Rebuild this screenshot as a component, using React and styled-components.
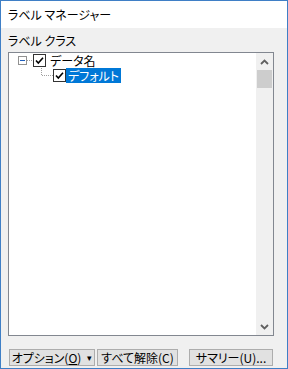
import React, { useState } from 'react'
import styled, { createGlobalStyle } from 'styled-components'

const GlobalStyle = createGlobalStyle`
  html, body {
    margin: 0;
    padding: 0;
    background: #ffffff;
  }
  body {
    font-family: 'Noto Sans CJK JP', 'Noto Sans', sans-serif;
    font-size: 12px;
    color: #000;
    font-feature-settings: 'palt';
  }
`

const Checkbox = () => (
  <CheckBoxBox>
    <svg width="13" height="13" viewBox="0 0 13 13">
      <rect x="0.5" y="0.5" width="12" height="12" fill="#fff" stroke="#333" />
      <path d="M3 6.5 L5.3 9 L10 3.8" fill="none" stroke="#000" strokeWidth="1.6" />
    </svg>
  </CheckBoxBox>
)

const Expander = () => (
  <svg width="15" height="9" viewBox="0 0 15 9">
    <rect x="0.5" y="0.5" width="8" height="8" fill="#fff" stroke="#919191" />
    <line x1="2" y1="4.5" x2="7" y2="4.5" stroke="#1e5ebc" />
    <line x1="9" y1="4.5" x2="15" y2="4.5" stroke="#a0a0a0" strokeDasharray="1 1" />
  </svg>
)

const ChildConnector = () => (
  <svg width="17" height="15" viewBox="0 0 17 15">
    <line x1="5.5" y1="0" x2="5.5" y2="7" stroke="#a0a0a0" strokeDasharray="1 1" />
    <line x1="6" y1="7.5" x2="17" y2="7.5" stroke="#a0a0a0" strokeDasharray="1 1" />
  </svg>
)

const Chevron = ({ down }) => (
  <svg width="9" height="6" viewBox="0 0 9 6">
    <path
      d={down ? 'M1 1 L4.5 4.5 L8 1' : 'M1 5 L4.5 1.5 L8 5'}
      fill="none"
      stroke="#606060"
      strokeWidth="1.8"
    />
  </svg>
)

const App = () => {
  const [selected] = useState('default')

  return (
    <Window>
      <GlobalStyle />
      <TitleBar>ラベル マネージャー</TitleBar>
      <Body>
        <GroupLabel>ラベル クラス</GroupLabel>
        <ListBox>
          <Tree>
            <Row indent={9}>
              <Expander />
              <Checkbox />
              <Label>データ名</Label>
            </Row>
            <Row indent={27}>
              <ChildConnector />
              <Checkbox />
              <Label selected={selected === 'default'}>デフォルト</Label>
            </Row>
          </Tree>
          <ScrollBar>
            <ArrowButton>
              <Chevron />
            </ArrowButton>
            <Thumb />
            <Track />
            <ArrowButton>
              <Chevron down />
            </ArrowButton>
          </ScrollBar>
        </ListBox>
        <ButtonRow>
          <Button width={86}>
            オプション(<u>O</u>)<Caret>▾</Caret>
          </Button>
          <Button width={81}>すべて解除(C)</Button>
          <Button width={84} spaced>サマリー(U)...</Button>
        </ButtonRow>
      </Body>
    </Window>
  )
}

export default App

const Window = styled.div`
  width: 288px;
  height: 369px;
  box-sizing: border-box;
  border: 1px solid #3f7fc6;
  display: flex;
  flex-direction: column;
  background: #fff;
`

const TitleBar = styled.div`
  height: 27px;
  padding-left: 7px;
  display: flex;
  align-items: center;
  background: #fff;
  font-size: 12px;
  line-height: 16px;
`

const Body = styled.div`
  flex: 1;
  background: #f0f0f0;
  padding: 5px 13px 2px 7px;
  display: flex;
  flex-direction: column;
`

const GroupLabel = styled.div`
  height: 16px;
  line-height: 16px;
  margin-bottom: 3px;
`

const ListBox = styled.div`
  height: 284px;
  box-sizing: border-box;
  border: 1px solid #828790;
  background: #fff;
  display: flex;
`

const Tree = styled.div`
  flex: 1;
  display: flex;
  flex-direction: column;
`

const Row = styled.div`
  height: 15px;
  padding-left: ${({ indent }) => indent}px;
  display: flex;
  align-items: center;
`

const CheckBoxBox = styled.span`
  display: flex;
  width: 13px;
  height: 13px;
`

const Label = styled.span`
  margin-left: ${({ selected }) => (selected ? 0 : 2)}px;
  padding: 0 2px;
  height: 15px;
  line-height: 15px;
  white-space: nowrap;
  background: ${({ selected }) => (selected ? '#0078d7' : 'transparent')};
  color: ${({ selected }) => (selected ? '#fff' : '#000')};
`

const ScrollBar = styled.div`
  width: 17px;
  background: #f0f0f0;
  display: flex;
  flex-direction: column;
`

const ArrowButton = styled.div`
  height: 17px;
  display: flex;
  align-items: center;
  justify-content: center;
`

const Thumb = styled.div`
  height: 18px;
  margin: 0 1px;
  background: #cdcdcd;
`

const Track = styled.div`
  flex: 1;
`

const ButtonRow = styled.div`
  margin-top: 13px;
  padding-left: 1px;
  display: flex;
  gap: 2px;
`

const Button = styled.div`
  width: ${({ width }) => width}px;
  height: 17px;
  box-sizing: border-box;
  margin-left: ${({ spaced }) => (spaced ? 9 : 0)}px;
  border: 1px solid #adadad;
  background: #e1e1e1;
  display: flex;
  align-items: center;
  justify-content: center;
  font-size: 12px;
  line-height: 15px;
  white-space: nowrap;

  u {
    text-decoration: underline;
  }
`

const Caret = styled.span`
  margin-left: 6px;
  font-size: 9px;
`
